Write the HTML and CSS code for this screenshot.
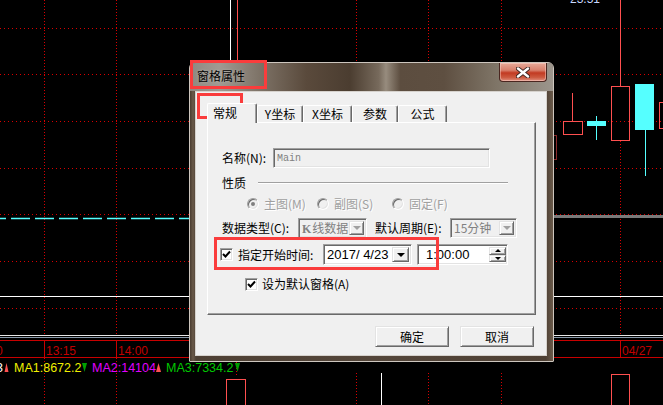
FILE: index.html
```html
<!DOCTYPE html>
<html lang="zh-CN">
<head>
  <meta charset="UTF-8">
  <title>窗格属性</title>
  <link rel="stylesheet" href="styles.css">
</head>
<body>
  <div class="screen">
    <svg class="chart" width="663" height="405" viewBox="0 0 663 405">
      <!-- grid -->
      <g stroke="#d80000" fill="none">
        <path stroke-dasharray="1 3" d="M0 28.5H663M0 74.5H663M0 121.5H663M0 168.5H663M0 214.5H663M0 261.5H663M0 308.5H663"/>
        <path stroke-dasharray="1 2" d="M44.5 0V334M116.5 0V334M356.5 0V334M428.5 0V334M501.5 0V334M620.5 141V334"/>
        <path stroke-dasharray="1 2" d="M44.5 358V405M116.5 358V405M356.5 373V405M428.5 373V405M501.5 373V405M236.5 362V376"/>
      </g>
      <!-- price lines -->
      <path d="M230.5 0V62" stroke="#fff"/>
      <path d="M237.5 0V62" stroke="#ff4d4d"/>
      <path d="M0 218.5H190" stroke="#55ffff" stroke-width="1.5" stroke-dasharray="19 5" stroke-dashoffset="13"/>
      <rect x="553" y="215" width="110" height="3" fill="#7a7a7a"/>
      <path d="M0 296.5H663" stroke="#fff"/>
      <!-- candles -->
      <text x="570" y="3" fill="#c8d8ff" font-family="Liberation Sans" font-size="12">23.51</text>
      <g fill="none" stroke="#ff5050">
        <path d="M572.5 93V121"/>
        <rect x="563.5" y="121.5" width="19" height="13"/>
        <path d="M620.5 0V86"/>
        <rect x="611.5" y="86.5" width="18" height="54"/>
        <rect x="659.5" y="102.5" width="12" height="26"/>
        <rect x="226.5" y="379.5" width="19" height="30"/>
        <rect x="611.5" y="374.5" width="18" height="35"/>
      </g>
      <rect x="549.5" y="135.5" width="7" height="24" fill="none" stroke="#8a2a2a"/>
      <g fill="#55ffff">
        <rect x="587" y="121" width="19" height="5"/>
        <rect x="596" y="116" width="1" height="24"/>
        <rect x="635" y="84" width="19" height="46"/>
        <rect x="645" y="130" width="1" height="46"/>
      </g>
      <path d="M381.5 373V405" stroke="#fff"/>
      <!-- time axis -->
      <path d="M0 335.5H663" stroke="#e8e8e8"/>
      <path d="M0 337.5H663" stroke="#8898a8"/>
      <path d="M0 340.5H663M0 357.5H663M44.5 340V357M116.5 340V357M620.5 340V357" stroke="#c80000"/>
      <g fill="#c00000" font-family="Liberation Sans" font-size="12">
        <text x="-4" y="355">0</text>
        <text x="46" y="355">13:15</text>
        <text x="118" y="355">14:00</text>
        <text x="622" y="355">04/27</text>
      </g>
      <!-- moving averages -->
      <g font-family="Liberation Sans" font-size="12.5">
        <text x="-4" y="372" fill="#ffffff">3</text>
        <text x="14" y="372" fill="#f0f000">MA1:8672.2</text>
        <text x="92" y="372" fill="#e000ff">MA2:14104</text>
        <text x="166" y="372" fill="#00c800">MA3:7334.2</text>
      </g>
      <g fill="#ff5050">
        <path d="M4.5 372L6.5 363L8.5 372Z"/>
        <path d="M156 372L158.5 363L161 372Z"/>
      </g>
      <g fill="#00a000">
        <path d="M82 363H87L84.5 372Z"/>
        <path d="M235 363H240L237.5 372Z"/>
      </g>
    </svg>

    <div class="dialog">
      <div class="titlebar">
        <span class="title">窗格属性</span>
        <button class="close" type="button">
          <svg width="14" height="11" viewBox="0 0 14 11">
            <path d="M2 1.5L12 9.5M12 1.5L2 9.5" stroke="#3b2420" stroke-width="4.2" stroke-linecap="round"/>
            <path d="M2 1.5L12 9.5M12 1.5L2 9.5" stroke="#fff" stroke-width="2.4" stroke-linecap="round"/>
          </svg>
        </button>
      </div>

      <div class="client">
        <div class="tabs">
          <div class="tab active">常规</div>
          <div class="tab w46">Y坐标</div>
          <div class="tab">X坐标</div>
          <div class="tab w46">参数</div>
          <div class="tab">公式</div>
        </div>

        <div class="panel">
          <div class="row row-name">
            <span class="label w-name">名称(N):</span>
            <span class="field sunken name-field">Main</span>
          </div>

          <div class="row row-group">
            <span class="label">性质</span>
            <span class="etch"></span>
          </div>

          <div class="row row-radios">
            <span class="radio-item w70"><span class="radio checked"></span><span class="label dim">主图(M)</span></span>
            <span class="radio-item w75"><span class="radio"></span><span class="label dim">副图(S)</span></span>
            <span class="radio-item"><span class="radio"></span><span class="label dim">固定(F)</span></span>
          </div>

          <div class="row row-type">
            <span class="label w-type">数据类型(C):</span>
            <span class="combo sunken disabled w69">
              <span class="combo-text"><b class="k">K</b>线数据</span>
              <span class="drop raised"><i class="arrow"></i></span>
            </span>
            <span class="label w-period">默认周期(E):</span>
            <span class="combo sunken disabled w67">
              <span class="combo-text">15分钟</span>
              <span class="drop raised"><i class="arrow"></i></span>
            </span>
          </div>

          <div class="row row-start">
            <span class="check sunken">
              <svg width="9" height="9" viewBox="0 0 9 9"><path d="M1 4L3.5 6.5L8 1.5" stroke="#000" stroke-width="2" fill="none"/></svg>
            </span>
            <span class="label w-start">指定开始时间:</span>
            <span class="combo sunken white w89">
              <span class="combo-text num">2017/ 4/23</span>
              <span class="drop raised"><i class="arrow"></i></span>
            </span>
            <span class="timefield sunken">
              <span class="combo-text num">1:00:00</span>
              <span class="spin">
                <span class="spin-btn raised"><i class="up"></i></span>
                <span class="spin-btn raised"><i class="down"></i></span>
              </span>
            </span>
          </div>

          <div class="row row-default">
            <span class="check sunken">
              <svg width="9" height="9" viewBox="0 0 9 9"><path d="M1 4L3.5 6.5L8 1.5" stroke="#000" stroke-width="2" fill="none"/></svg>
            </span>
            <span class="label">设为默认窗格(A)</span>
          </div>
        </div>

        <div class="buttons">
          <button class="btn raised" type="button">确定</button>
          <button class="btn raised" type="button">取消</button>
        </div>
      </div>
    </div>

    <div class="mark mark-title"></div>
    <div class="mark mark-tab"></div>
    <div class="mark mark-start"></div>
  </div>
</body>
</html>
```

FILE: styles.css
```css
* {
  box-sizing: border-box;
}

body {
  margin: 0;
  background-color: #000;
  font-family: "Noto Sans CJK SC", "Liberation Sans", sans-serif;
  font-size: 12px;
  color: #000;
}

.screen {
  position: relative;
  width: 663px;
  height: 405px;
  overflow: hidden;
}

.chart {
  position: absolute;
  top: 0;
  left: 0;
}

/* window frame */
.dialog {
  position: absolute;
  left: 189px;
  top: 62px;
  width: 365px;
  height: 300px;
  display: flex;
  flex-direction: column;
  border: 1px solid #cdc6be;
  border-radius: 6px 6px 1px 1px;
  background: linear-gradient(90deg, #4a3c30, #6a5a4a 3px, #4e4034 6px, #54463a 50%, #4e4034 98%, #6a5a4a);
}

.titlebar {
  display: flex;
  justify-content: space-between;
  align-items: flex-start;
  height: 28px;
  border-radius: 5px 5px 0 0;
  background: linear-gradient(90deg, #8e8981 0%, #a09a92 8%, #7b7064 20%, #5a4a3c 32%, #4b3d30 44%, #776a5c 52%, #978c7e 54%, #5c4d3f 58%, #5e4f41 70%, #7e7466 84%, #9c958c 100%);
}

.title {
  padding: 6px 0 0 7px;
  line-height: 14px;
  font-size: 12px;
  color: #000;
  text-shadow: 0 0 3px rgba(255, 255, 255, 0.35);
}

.close {
  width: 48px;
  height: 19px;
  margin-right: 6px;
  padding: 0;
  display: flex;
  justify-content: center;
  align-items: center;
  border: 1px solid #4a2620;
  border-top: none;
  border-radius: 0 0 4px 4px;
  background: linear-gradient(#e7a998, #d8806c 40%, #c23a22 55%, #cc5a40 80%, #e09080);
  box-shadow: inset 0 0 0 1px rgba(255, 220, 210, 0.45);
}

.client {
  margin: 0 6px 5px 5px;
  height: 265px;
  padding: 11px 10px 8px 11px;
  border: 1px solid #d6d2cd;
  background-color: #f0f0f0;
}

/* tabs */
.tabs {
  display: flex;
  align-items: flex-end;
  height: 19px;
}

.tab {
  width: 49px;
  height: 17px;
  display: flex;
  justify-content: center;
  align-items: center;
  border: 1px solid #fff;
  border-bottom: none;
  border-right-color: #696969;
  border-radius: 2px 2px 0 0;
  box-shadow: inset -1px 0 0 #a0a0a0;
  background-color: #f0f0f0;
  line-height: 14px;
}

.tab.w46 {
  width: 46px;
}

.tab.active {
  position: relative;
  z-index: 1;
  width: 50px;
  height: 20px;
  margin-bottom: -1px;
  justify-content: flex-start;
  padding: 0 0 2px 5px;
}

.panel {
  height: 193px;
  padding: 0 0 0 14px;
  border: 1px solid #fff;
  border-right-color: #696969;
  border-bottom-color: #696969;
  box-shadow: inset -1px -1px 0 #a0a0a0;
}

.row {
  display: flex;
  align-items: center;
}

.label {
  flex: none;
  line-height: 14px;
  white-space: nowrap;
}

.label.dim {
  color: #a0a0a0;
  text-shadow: 1px 1px 0 #fff;
}

.w-name { width: 51px; }
.w-type { width: 76px; }
.w-period { width: 75px; margin-left: 8px; }
.w-start { width: 85px; }

.row-name {
  margin-top: 25px;
  height: 20px;
}

.row-group {
  margin-top: 8px;
  height: 14px;
}

.etch {
  width: 250px;
  height: 2px;
  margin-left: 12px;
  border-top: 1px solid #a0a0a0;
  border-bottom: 1px solid #fff;
}

.row-radios {
  margin-top: 7px;
  height: 14px;
  padding-left: 25px;
}

.radio-item {
  display: flex;
  align-items: center;
  gap: 5px;
}

.radio-item.w70 { width: 70px; }
.radio-item.w75 { width: 75px; }

.radio {
  position: relative;
  width: 12px;
  height: 12px;
  border-radius: 50%;
  border: 1px solid;
  border-color: #a0a0a0 #fff #fff #a0a0a0;
  box-shadow: inset 1px 1px 0 #696969, inset -1px -1px 0 #e3e3e3;
  background-color: #f0f0f0;
}

.radio.checked::after {
  content: "";
  position: absolute;
  left: 3px;
  top: 3px;
  width: 4px;
  height: 4px;
  border-radius: 50%;
  background-color: #808080;
}

.row-type {
  margin-top: 7px;
  height: 20px;
}

.row-start {
  margin-top: 6px;
  height: 21px;
  margin-left: -2px;
}

.row-default {
  margin-top: 12px;
  height: 14px;
  padding-left: 23px;
}

/* 3d edges */
.sunken {
  border: 1px solid;
  border-color: #a0a0a0 #fff #fff #a0a0a0;
  box-shadow: inset 1px 1px 0 #696969, inset -1px -1px 0 #e3e3e3;
}

.raised {
  background-color: #f0f0f0;
  border: 1px solid;
  border-color: #e3e3e3 #696969 #696969 #e3e3e3;
  box-shadow: inset 1px 1px 0 #fff, inset -1px -1px 0 #a0a0a0;
}

.field {
  display: flex;
  align-items: center;
  height: 20px;
}

.name-field {
  width: 217px;
  padding-left: 3px;
  background-color: #f0f0f0;
  font-family: "Liberation Mono", monospace;
  font-size: 10px;
  color: #808080;
}

.combo {
  display: flex;
  align-items: center;
  height: 100%;
  padding: 2px 2px 2px 4px;
}

.combo.disabled {
  background-color: #f0f0f0;
  color: #808080;
  padding-left: 3px;
}

.combo.white {
  background-color: #fff;
  padding-left: 3px;
}

.w69 { width: 69px; }
.w67 { width: 67px; }
.w89 { width: 89px; }

.combo-text {
  flex: 1;
  line-height: 14px;
  white-space: pre;
  overflow: hidden;
}

.combo-text.num {
  font-family: "Liberation Sans", sans-serif;
  font-size: 13px;
}

.k {
  margin-right: 1px;
  font-family: "Liberation Serif", serif;
  font-size: 12px;
}

.drop {
  flex: none;
  width: 17px;
  height: 100%;
  display: flex;
  justify-content: center;
  align-items: center;
}

.combo.disabled .drop {
  width: 15px;
}

.arrow {
  width: 0;
  height: 0;
  border-left: 4px solid transparent;
  border-right: 4px solid transparent;
  border-top: 4px solid #000;
}

.combo.disabled .arrow {
  border-top-color: #a0a0a0;
}

.timefield {
  display: flex;
  align-items: center;
  width: 91px;
  height: 100%;
  margin-left: 5px;
  padding: 2px 1px 2px 8px;
  background-color: #fff;
}

.spin {
  display: flex;
  flex-direction: column;
  width: 17px;
  height: 100%;
}

.spin-btn {
  flex: 1;
  display: flex;
  justify-content: center;
  align-items: center;
}

.up,
.down {
  width: 0;
  height: 0;
  border-left: 3px solid transparent;
  border-right: 3px solid transparent;
}

.up {
  border-bottom: 3px solid #000;
}

.down {
  border-top: 3px solid #000;
}

.check {
  flex: none;
  width: 13px;
  height: 13px;
  margin-right: 5px;
  display: flex;
  justify-content: center;
  align-items: center;
  background-color: #fff;
}

.row-default .check {
  margin-right: 4px;
}

/* buttons */
.buttons {
  display: flex;
  justify-content: flex-end;
  gap: 11px;
  margin-top: 11px;
  padding-right: 2px;
}

.btn {
  width: 74px;
  height: 21px;
  padding: 0;
  font-family: "Noto Sans CJK SC", sans-serif;
  font-size: 12px;
  line-height: 14px;
  color: #000;
}

/* red annotation boxes */
.mark {
  position: absolute;
  border: 3px solid #fa3c3c;
}

.mark-title {
  left: 190px;
  top: 60px;
  width: 77px;
  height: 29px;
}

.mark-tab {
  left: 197px;
  top: 93px;
  width: 46px;
  height: 26px;
}

.mark-start {
  left: 214px;
  top: 237px;
  width: 225px;
  height: 33px;
}
```
